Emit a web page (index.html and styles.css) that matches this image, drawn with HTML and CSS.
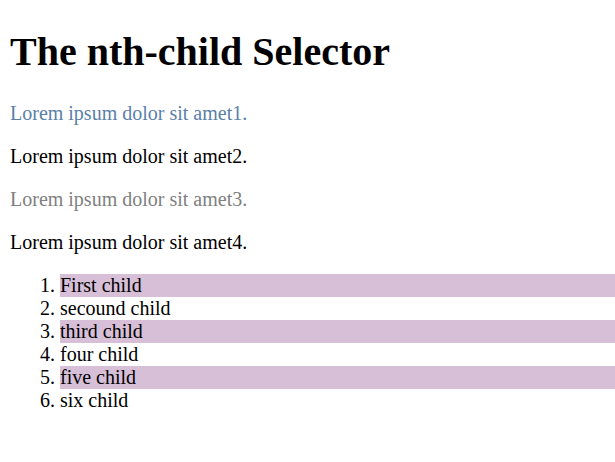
FILE: index.html
```html
<!DOCTYPE html>
<html lang="en">
<head>
  <meta charset="UTF-8">
  <title>The nth-child Selector</title>
  <link rel="stylesheet" href="styles.css">
</head>
<body>
  <h1>The nth-child Selector</h1>

  <p>Lorem ipsum dolor sit amet1.</p>
  <p>Lorem ipsum dolor sit amet2.</p>
  <p>Lorem ipsum dolor sit amet3.</p>
  <p>Lorem ipsum dolor sit amet4.</p>

  <ol>
    <li>First child</li>
    <li>secound child</li>
    <li>third child</li>
    <li>four child</li>
    <li>five child</li>
    <li>six child</li>
  </ol>
</body>
</html>
```

FILE: styles.css
```css
body {
  font-family: "Liberation Serif", "Times New Roman", serif;
  font-size: 20px;
  margin: 10px 0 10px 10px;
  color: #000;
  background: #fff;
}

h1 {
  font-size: 40px;
  margin: 18px 0 27px;
}

p {
  margin: 20px 0;
}

/* every other paragraph gets its own colour */
p:nth-child(2) {
  color: #5a7fa9;
}

p:nth-child(4) {
  color: #808080;
}

ol {
  margin: 19px 0 20px;
  padding-left: 50px;
}

li:nth-child(odd) {
  background-color: #d8bfd8;
}
```
